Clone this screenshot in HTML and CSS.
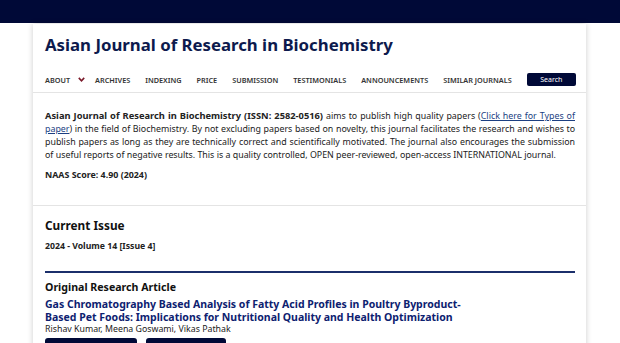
FILE: index.html
```html
<!DOCTYPE html>
<html lang="en">
<head>
    <meta charset="UTF-8">
    <meta name="viewport" content="width=device-width, initial-scale=1.0">
    <title>Asian Journal of Research in Biochemistry</title>
    <link rel="stylesheet" href="styles.css">
</head>
<body>
<div class="topbar"></div>

<div class="page">
    <header class="masthead">
        <h1>Asian Journal of Research in Biochemistry</h1>
    </header>

    <nav class="mainnav">
        <a href="#" class="has-menu">About
            <svg class="chev" width="7" height="5" viewBox="0 0 7 5"><path d="M0.8 0.9 L3.5 3.8 L6.2 0.9" fill="none" stroke="#7a1a2a" stroke-width="1.6"/></svg>
        </a>
        <a href="#">Archives</a>
        <a href="#">Indexing</a>
        <a href="#">Price</a>
        <a href="#">Submission</a>
        <a href="#">Testimonials</a>
        <a href="#">Announcements</a>
        <a href="#">Similar Journals</a>
        <button type="button" class="search-btn">Search</button>
    </nav>

    <section class="about">
        <p><strong>Asian Journal of Research in Biochemistry (ISSN: 2582-0516)</strong> aims to publish high quality papers (<a href="#">Click here for Types of paper</a>) in the field of Biochemistry. By not excluding papers based on novelty, this journal facilitates the research and wishes to publish papers as long as they are technically correct and scientifically motivated. The journal also encourages the submission of useful reports of negative results. This is a quality controlled, OPEN peer-reviewed, open-access INTERNATIONAL journal.</p>
        <p class="score"><strong>NAAS Score: 4.90 (2024)</strong></p>
    </section>

    <section class="current">
        <h2>Current Issue</h2>
        <div class="issue">2024 - Volume 14 [Issue 4]</div>

        <div class="article-section">
            <h3>Original Research Article</h3>
            <a href="#" class="article-title">Gas Chromatography Based Analysis of Fatty Acid Profiles in Poultry Byproduct-Based Pet Foods: Implications for Nutritional Quality and Health Optimization</a>
            <div class="authors">Rishav Kumar, Meena Goswami, Vikas Pathak</div>
            <div class="article-links">
                <a href="#" class="pill wide">Full Article - PDF</a>
                <a href="#" class="pill">Page 1-14</a>
            </div>
        </div>
    </section>
</div>
</body>
</html>
```

FILE: styles.css
```css
body {
    margin: 0;
    font-family: 'Noto Sans', 'Open Sans', sans-serif;
    background-color: #fff;
    color: #222;
}
.topbar {
    height: 23px;
    background-color: #000937;
}
.page {
    width: 553px;
    margin: 1px 0 0 33px;
    background: #fff;
    box-shadow: 0 0 6px rgba(0, 0, 0, 0.2);
}
.masthead {
    padding: 9px 11px 0 12px;
}
.masthead h1 {
    margin: 0;
    font-size: 16.8px;
    line-height: 24px;
    color: #0d1a4d;
    font-weight: 700;
}
.mainnav {
    display: flex;
    align-items: center;
    height: 13px;
    padding: 16px 10px 6px 12px;
    border-bottom: 1px solid #e4e4e4;
}
.mainnav a {
    font-size: 7.3px;
    font-weight: 600;
    text-transform: uppercase;
    color: #333;
    text-decoration: none;
    margin-right: 15px;
    white-space: nowrap;
    display: flex;
    align-items: center;
}
.mainnav .has-menu {
    margin-right: 10px;
}
.mainnav .chev {
    margin-left: 8px;
}
.search-btn {
    margin-left: auto;
    background-color: #000937;
    color: #fff;
    border: none;
    border-radius: 2px;
    font-family: inherit;
    font-size: 7px;
    width: 52px;
    height: 13px;
    padding: 0;
}
.about {
    padding: 16px 11px 23px 12px;
    border-bottom: 1px solid #e4e4e4;
    font-size: 8.85px;
    line-height: 13px;
}
.about p {
    margin: 0;
    text-align: justify;
}
.about p strong {
    font-size: 9.3px;
}
.about a {
    color: #1c3f82;
}
.about .score {
    margin-top: 6px;
}
.about .score strong {
    font-size: 8.9px;
}
.current {
    padding: 11px 11px 0 12px;
}
.current h2 {
    margin: 0;
    font-size: 11.8px;
    line-height: 16px;
    color: #111;
}
.issue {
    margin-top: 7px;
    font-size: 8.7px;
    line-height: 12px;
    font-weight: 700;
    color: #222;
}
.article-section {
    margin-top: 19px;
    border-top: 2px solid #1b2f6b;
    padding-top: 7px;
}
.article-section h3 {
    margin: 0;
    font-size: 10.6px;
    line-height: 14px;
    color: #111;
}
.article-title {
    display: block;
    width: 430px;
    margin-top: 4px;
    font-size: 10.5px;
    line-height: 12.5px;
    font-weight: 700;
    color: #0d2170;
    text-decoration: none;
}
.authors {
    font-size: 8.8px;
    line-height: 12px;
    color: #222;
}
.article-links {
    display: flex;
    gap: 9px;
    margin-top: 3px;
}
.pill {
    background-color: #000937;
    color: #fff;
    font-size: 8px;
    border-radius: 3px;
    padding: 3px 0;
    width: 80px;
    text-align: center;
    text-decoration: none;
}
.pill.wide {
    width: 92px;
}
```
